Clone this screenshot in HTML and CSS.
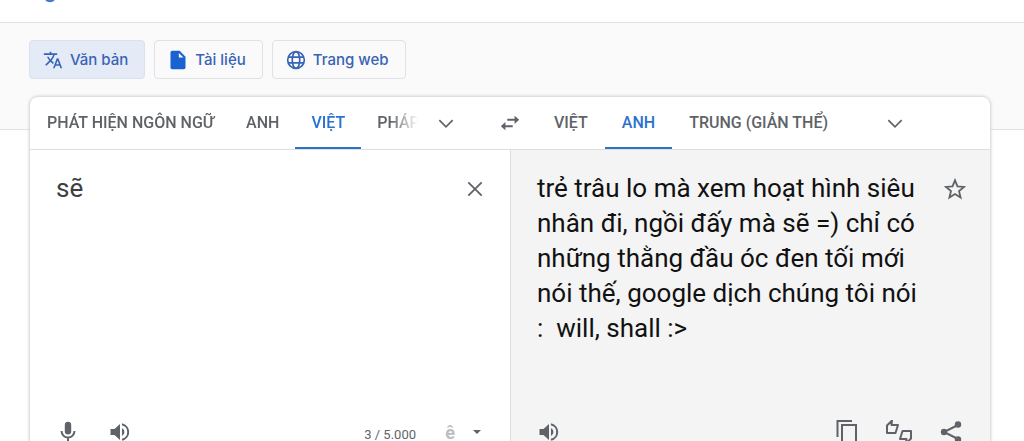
FILE: index.html
```html
<!DOCTYPE html>
<html lang="vi">
<head>
<meta charset="utf-8">
<title>Google Dịch</title>
<link rel="stylesheet" href="styles.css">
</head>
<body>
<header class="topbar">
  <svg class="logo-tail" viewBox="0 0 12 3" aria-hidden="true"><path d="M0 -3C1 4 11 4 12 -3Z" fill="#4878d0"/></svg>
</header>
<main>
  <nav class="modes">
    <button class="mode mode-on"><svg class="icon" viewBox="0 0 24 24"><path d="M12.87 15.07l-2.54-2.51.03-.03A17.5 17.5 0 0 0 14.07 6H17V4h-7V2H8v2H1v2h11.17C11.5 7.92 10.44 9.75 9 11.35 8.07 10.32 7.3 9.19 6.69 8h-2c.73 1.63 1.73 3.17 2.98 4.56l-5.09 5.02L4 19l5-5 3.11 3.11.76-2.04zM18.5 10h-2L12 22h2l1.12-3h4.75L21 22h2l-4.5-12zm-2.62 7l1.62-4.33L19.12 17h-3.24z"/></svg>Văn bản</button>
    <button class="mode"><svg class="icon" viewBox="0 0 24 24"><path fill-rule="evenodd" d="M14 1H5a2 2 0 0 0-2 2v18c0 1.100.9 2 2 2h14a2 2 0 0 0 2-2V8l-7-7zm-1 8V3.500L18.500 9H13z"/></svg>Tài liệu</button>
    <button class="mode"><svg class="icon" viewBox="0 0 24 24" ><g fill="none" stroke="currentColor" stroke-width="2"><circle cx="12" cy="12" r="10"/><ellipse cx="12" cy="12" rx="4.500" ry="10"/><path d="M3 8.500h18M3 15.500h18"/></g></svg>Trang web</button>
  </nav>
  <section class="card">
    <div class="languages">
      <div class="lang-side">
        <div class="tabs tabs-fade">
          <button class="tab">PHÁT HIỆN NGÔN NGỮ</button>
          <button class="tab">ANH</button>
          <button class="tab tab-on">VIỆT</button>
          <button class="tab">PHÁP</button>
        </div>
        <button class="tool more" aria-label="Thêm ngôn ngữ nguồn"><svg class="icon" viewBox="0 0 24 24"><path d="M4 8.500l8 8 8-8" fill="none" stroke="currentColor" stroke-width="2"/></svg></button>
      </div>
      <button class="swap" aria-label="Hoán đổi ngôn ngữ"><svg class="icon icon-swap" viewBox="0 0 24 24"><path d="M17 4l5 4.500-5 4.500V9.600H9V7.400h8zM7 11v3.400h8v2.200H7V20l-5-4.500z"/></svg></button>
      <div class="lang-side">
        <div class="tabs">
          <button class="tab">VIỆT</button>
          <button class="tab tab-on">ANH</button>
          <button class="tab">TRUNG (GIẢN THỂ)</button>
        </div>
        <button class="tool more more-target" aria-label="Thêm ngôn ngữ đích"><svg class="icon" viewBox="0 0 24 24"><path d="M4 8.500l8 8 8-8" fill="none" stroke="currentColor" stroke-width="2"/></svg></button>
      </div>
    </div>
    <div class="panes">
      <div class="pane">
        <div class="entry">
          <textarea class="source" aria-label="Văn bản nguồn" spellcheck="false">sẽ</textarea>
          <button class="tool" aria-label="Xóa văn bản"><svg class="icon" viewBox="0 0 24 24"><path d="M4 4l16 16M20 4L4 20" fill="none" stroke="currentColor" stroke-width="2.200"/></svg></button>
        </div>
        <div class="toolbar">
          <button class="tool" aria-label="Nhập bằng giọng nói"><svg class="icon icon-big" viewBox="0 0 24 24"><path d="M12 14.500a3.200 3.200 0 0 0 3.200-3.200V5a3.200 3.200 0 0 0-6.400 0v6.300a3.200 3.200 0 0 0 3.200 3.200z"/><path d="M5.500 11a6.500 6.500 0 0 0 13 0M12 17.500V22" fill="none" stroke="currentColor" stroke-width="2"/></svg></button>
          <button class="tool" aria-label="Nghe văn bản nguồn"><svg class="icon icon-big" viewBox="0 0 24 24"><path d="M2.500 9v6h4l5.500 5V4L6.500 9zM14 8v8a4.500 4.500 0 0 0 0-8z"/><path d="M14 4.200a8 8 0 0 1 0 15.600" fill="none" stroke="currentColor" stroke-width="2"/></svg></button>
          <span class="count">3 / 5.000</span>
          <button class="accent" aria-label="Bật công cụ nhập">ê</button>
          <button class="accent-menu" aria-label="Chọn công cụ nhập"><svg class="caret" viewBox="0 0 10 5"><path d="M0 0h10L5 5z"/></svg></button>
        </div>
      </div>
      <div class="pane pane-target">
        <div class="entry">
          <p class="result">trẻ trâu lo mà xem hoạt hình siêu nhân đi, ngồi đấy mà sẽ =) chỉ có những thằng đầu óc đen tối mới nói thế, google dịch chúng tôi nói :&nbsp; will, shall :&gt;</p>
          <button class="tool" aria-label="Lưu bản dịch"><svg class="icon icon-star" viewBox="0 0 24 24"><path d="M12 2.500l2.700 6.600 7.100.6-5.400 4.600 1.700 7L12 17.500l-6.100 3.800 1.700-7-5.400-4.600 7.100-.6z" fill="none" stroke="currentColor" stroke-width="2"/></svg></button>
        </div>
        <div class="toolbar">
          <button class="tool" aria-label="Nghe bản dịch"><svg class="icon icon-big" viewBox="0 0 24 24"><path d="M2.500 9v6h4l5.500 5V4L6.500 9zM14 8v8a4.500 4.500 0 0 0 0-8z"/><path d="M14 4.200a8 8 0 0 1 0 15.600" fill="none" stroke="currentColor" stroke-width="2"/></svg></button>
          <span class="spacer"></span>
          <button class="tool" aria-label="Sao chép"><svg class="icon icon-big" viewBox="0 0 24 24"><path d="M2.500 17V1H17M7 5h14v17H7z" fill="none" stroke="currentColor" stroke-width="2"/></svg></button>
          <button class="tool" aria-label="Xếp hạng bản dịch"><svg class="icon icon-wide" viewBox="0 0 28 24"><g fill="none" stroke="currentColor" stroke-width="2" stroke-linejoin="round"><path d="M2 5.500l5-5-.5 4.500h6.500l-2.500 8H2z"/><path d="M26 18.500l-5 5 .5-4.500H15l2.500-8H26z"/></g></svg></button>
          <button class="tool" aria-label="Chia sẻ"><svg class="icon icon-big" viewBox="0 0 24 24"><path d="M19 5L5 12l14 7" fill="none" stroke="currentColor" stroke-width="2"/><circle cx="19" cy="4.500" r="3.200"/><circle cx="5" cy="12" r="3.200"/><circle cx="19" cy="19.500" r="3.200"/></svg></button>
        </div>
      </div>
    </div>
  </section>
</main>
</body>
</html>
```
FILE: styles.css
```css
* { box-sizing: border-box; }

html { overflow: hidden; }

body {
  margin: 0;
  background: #fff;
  color: #5f6368;
  font-family: Roboto, "Liberation Sans", sans-serif;
}

button {
  margin: 0;
  padding: 0;
  border: 0;
  background: none;
  color: inherit;
  font: inherit;
  cursor: pointer;
}

.topbar {
  height: 23px;
  padding-left: 44px;
  border-bottom: 1px solid #e2e2e2;
}

.logo-tail {
  display: block;
  width: 12px;
  height: 3px;
}

.icon {
  flex: none;
  width: 20px;
  height: 20px;
  fill: currentColor;
}

.icon-swap,
.icon-star {
  width: 22px;
  height: 22px;
}

.icon-big {
  width: 24px;
  height: 24px;
}

.icon-wide {
  width: 28px;
  height: 24px;
}

.modes {
  display: flex;
  gap: 9px;
  height: 107px;
  padding: 17px 29px 0;
  border-bottom: 1px solid #e2e2e2;
  background: #fafafa;
}

.mode {
  display: flex;
  align-items: center;
  gap: 7px;
  height: 39px;
  padding: 0 16px 0 13px;
  border: 1px solid #dfe1e5;
  border-radius: 4px;
  color: #3763b5;
  font-family: Inter, Roboto, sans-serif;
  font-size: 15px;
  font-weight: 500;
}

.mode .icon { fill: #1a62d0; }

.mode-on {
  border-color: #d9e1ee;
  background: #e4ebf7;
}

.mode-on .icon { fill: #3763b5; }

.card {
  margin: -33px 34px 0 30px;
  overflow: hidden;
  border-radius: 8px;
  background: #fff;
  box-shadow: 0 0 3px 1px #cfcfcf;
  position: relative;
}

.languages {
  display: grid;
  grid-template-columns: minmax(0, 1fr) 54px minmax(0, 1fr);
  height: 53px;
  border-bottom: 1px solid #dedede;
}

.lang-side,
.tabs { display: flex; min-width: 0; }

.tabs-fade {
  overflow: hidden;
  padding-left: 1px;
  -webkit-mask-image: linear-gradient(to left, transparent 2px, #000 30px);
  mask-image: linear-gradient(to left, transparent 2px, #000 30px);
}

.tab {
  flex: none;
  padding: 0 17px;
  border-bottom: 2px solid transparent;
  font-size: 16px;
  font-weight: 500;
  white-space: nowrap;
}

.tabs-fade .tab { padding: 0 16px; }

.tab-on {
  border-bottom-color: #2b74c4;
  color: #2b72cf;
}

.tool {
  display: flex;
  flex: none;
  align-items: center;
  justify-content: center;
  width: 52px;
  height: 48px;
}

.more {
  height: 52px;
  margin: 0 11px 0 auto;
}

.more-target { margin-right: 69px; }

.swap {
  display: flex;
  align-items: center;
  justify-content: center;
}

.panes {
  display: grid;
  grid-template-columns: repeat(2, minmax(0, 1fr));
}

.pane {
  display: flex;
  flex-direction: column;
  min-height: 306px;
}

.pane-target {
  border-left: 1px solid #dedede;
  background: #f4f4f4;
}

.entry {
  display: flex;
  flex: 1;
  padding: 15px 9px 0 26px;
}

.source,
.result {
  flex: 1;
  min-width: 0;
  margin: 0;
  padding: 6px 6px 0 0;
  border: 0;
  background: none;
  font-family: inherit;
  font-size: 26px;
  line-height: 35px;
}

.source {
  outline: 0;
  resize: none;
  color: #3c4043;
}

.result { color: #111; }

.toolbar {
  display: flex;
  align-items: center;
  padding: 0 13px 0 12px;
}

.pane:first-child .toolbar { padding: 0 21px 0 12px; }

.count {
  margin-left: auto;
  padding-top: 4px;
  font-size: 13px;
}

.accent {
  width: 16px;
  margin-left: 26px;
  color: #bdbdbd;
  font-size: 18px;
  font-weight: 700;
}

.accent-menu {
  display: flex;
  align-items: center;
  justify-content: center;
  width: 24px;
  height: 48px;
  margin-left: 7px;
}

.caret {
  width: 8px;
  height: 4px;
  fill: currentColor;
}

.spacer { flex: 1; }
```
